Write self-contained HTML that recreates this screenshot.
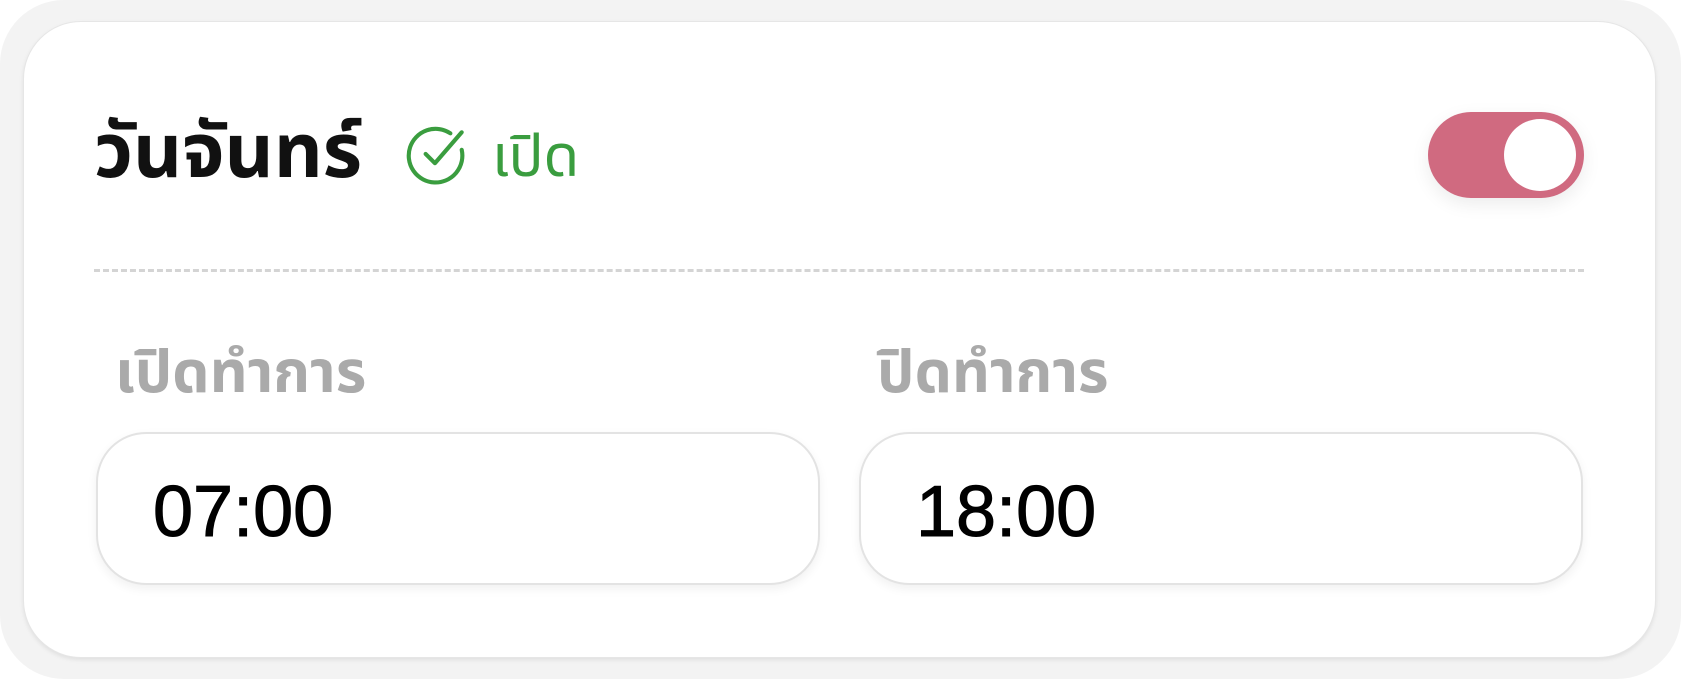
<!DOCTYPE html>
<html><head><meta charset="utf-8"><style>
html,body{margin:0;padding:0;width:1681px;height:679px;overflow:hidden;background:#fff;}
.outer{position:absolute;left:0;top:0;width:1681px;height:679px;background:#f3f3f3;border-radius:64px;}
.card{position:absolute;left:23px;top:21px;width:1633px;height:637px;background:#fff;border-radius:58px;box-shadow:0 2px 4px rgba(0,0,0,.08);border:1px solid #e6e6e6;box-sizing:border-box;}
.title{position:absolute;left:94px;top:102px;font:bold 76px "Liberation Sans","Noto Sans Thai","Loma",sans-serif;color:#111;line-height:100px;}
.icon{position:absolute;left:406px;top:123px;}
.open{position:absolute;left:492px;top:112px;font:58px "Liberation Sans","Noto Sans Thai",sans-serif;color:#3a9d3f;line-height:90px;}
.tog{position:absolute;left:1428px;top:112px;width:156px;height:86px;border-radius:43px;background:#d06a80;box-shadow:0 6px 18px rgba(0,0,0,.08);}
.knob{position:absolute;left:76px;top:7px;width:72px;height:72px;border-radius:50%;background:#fff;}
.dash{position:absolute;left:94px;top:269px;width:1490px;border-top:3px dashed #d4d4d4;}
.lbl{position:absolute;top:329px;font:bold 59px "Liberation Sans","Noto Sans Thai",sans-serif;color:#aaa;line-height:86px;}
.inp{position:absolute;top:432px;width:724px;height:153px;border-radius:50px;border:2px solid #e3e3e3;box-sizing:border-box;background:#fff;box-shadow:0 4px 10px rgba(0,0,0,.06);}
.inp span{position:absolute;left:55px;top:40px;font:72px "Liberation Sans",sans-serif;color:#000;line-height:76px;-webkit-text-stroke:1px #000;}
</style></head><body>
<div class="outer"></div>
<div class="card"></div>
<div class="title">วันจันทร์</div>
<svg class="icon" width="64" height="66" viewBox="0 0 62 64"><path d="M54 26 A26 26 0 1 1 43 10" fill="none" stroke="#3a9d3f" stroke-width="4" stroke-linecap="round"/><path d="M19 30 L28 39 L54 9" fill="none" stroke="#3a9d3f" stroke-width="4" stroke-linecap="round" stroke-linejoin="round"/></svg>
<div class="open">เปิด</div>
<div class="tog"><div class="knob"></div></div>
<div class="dash"></div>
<div class="lbl" style="left:115px">เปิดทำการ</div>
<div class="lbl" style="left:877px">ปิดทำการ</div>
<div class="inp" style="left:96px"><span>07:00</span></div>
<div class="inp" style="left:859px"><span>18:00</span></div>
</body></html>
